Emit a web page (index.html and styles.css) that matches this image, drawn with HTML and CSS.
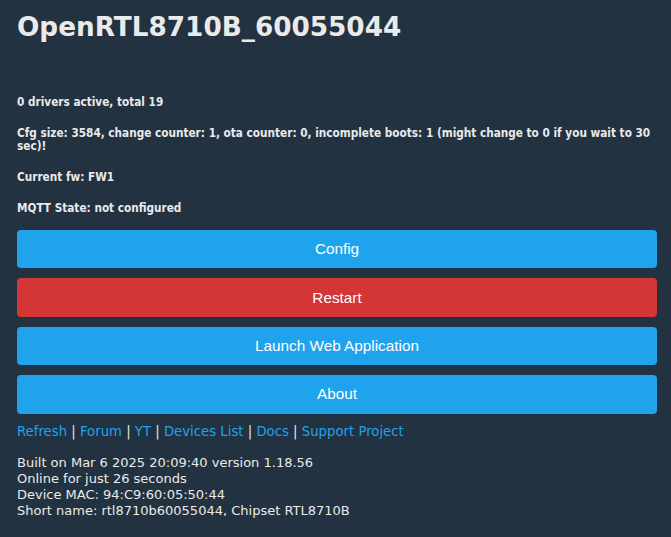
FILE: index.html
```html
<!DOCTYPE html>
<html>
<head>
<meta charset="utf-8">
<link rel="stylesheet" href="styles.css">
</head>
<body>
<div class="page">
  <h1 class="title">OpenRTL8710B_60055044</h1>
  <div class="status">
    <p class="st st-first">0 drivers active, total 19</p>
    <p class="st">Cfg size: 3584, change counter: 1, ota counter: 0, incomplete boots: 1 (might change to 0 if you wait to 30 sec)!</p>
    <p class="st">Current fw: FW1</p>
    <p class="st">MQTT State: not configured</p>
  </div>
  <div class="buttons">
    <button class="btn">Config</button>
    <button class="btn btn-red">Restart</button>
    <button class="btn">Launch Web Application</button>
    <button class="btn">About</button>
  </div>
  <div class="links">
    <a href="#">Refresh</a> | <a href="#">Forum</a> | <a href="#">YT</a> | <a href="#">Devices List</a> | <a href="#">Docs</a> | <a href="#">Support Project</a>
  </div>
  <div class="info">
    Built on Mar 6 2025 20:09:40 version 1.18.56<br>
    Online for just 26 seconds<br>
    Device MAC: 94:C9:60:05:50:44<br>
    Short name: rtl8710b60055044, Chipset RTL8710B
  </div>
</div>
</body>
</html>
```

FILE: styles.css
```css
html, body {
  margin: 0;
  padding: 0;
  background: #223240;
  color: #eaeaea;
  font-family: "DejaVu Sans", Verdana, sans-serif;
}
.page {
  padding: 8px 14px 0 17px;
}
.title {
  margin: 0;
  padding-top: 4px;
  font-size: 26.3px;
  line-height: 30px;
  font-weight: bold;
  color: #eaeaea;
}
.status {
  margin-top: 54px;
}
.st {
  margin: 0 0 18px 0;
  font-family: "DejaVu Sans Condensed", "DejaVu Sans", sans-serif;
  font-weight: bold;
  font-size: 11.7px;
  line-height: 13px;
}
.buttons {
  display: flex;
  flex-direction: column;
  gap: 10px;
  margin-top: -3px;
}
.btn {
  display: block;
  width: 100%;
  height: 38.4px;
  border: 0;
  border-radius: 4px;
  background: #1fa3ec;
  color: #fff;
  font-family: "Liberation Sans", Arial, sans-serif;
  font-size: 15.3px;
  padding: 0;
}
.btn-red {
  background: #d43535;
}
.links {
  margin-top: 9px;
  font-size: 13.25px;
  line-height: 18px;
}
.links a {
  color: #1fa3ec;
  text-decoration: none;
}
.info {
  margin-top: 14px;
  font-size: 13px;
  line-height: 16px;
}
```
